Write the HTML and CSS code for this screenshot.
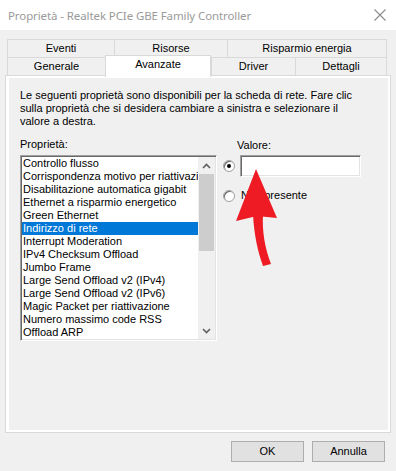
FILE: index.html
```html
<!DOCTYPE html>
<html lang="it">
<head>
<meta charset="utf-8">
<title>Proprietà - Realtek PCIe GBE Family Controller</title>
<link rel="stylesheet" href="styles.css">
</head>
<body>
<div class="window">
  <div class="titlebar">
    <span class="title">Proprietà - Realtek PCIe GBE Family Controller</span>
    <svg class="close" width="12" height="12" viewBox="0 0 12 12"><path d="M0.5 0.5 L11.5 11.5 M11.5 0.5 L0.5 11.5" stroke="#8a8a8a" stroke-width="1.1" fill="none"/></svg>
  </div>

  <div class="tabs">
    <div class="tabrow">
      <div class="tab t-eventi">Eventi</div>
      <div class="tab t-risorse">Risorse</div>
      <div class="tab t-risparmio last">Risparmio energia</div>
    </div>
    <div class="tabrow">
      <div class="tab t-generale">Generale</div>
      <div class="tab t-avanzate selected">Avanzate</div>
      <div class="tab t-driver">Driver</div>
      <div class="tab t-dettagli last">Dettagli</div>
    </div>
  </div>

  <div class="panel">
    <div class="page">
      <p class="intro">Le seguenti proprietà sono disponibili per la scheda di rete. Fare clic<br>sulla proprietà che si desidera cambiare a sinistra e selezionare il<br>valore a destra.</p>
      <div class="cols">
        <div class="propcol">
          <div class="label">Proprietà:</div>
          <div class="listbox">
            <ul class="items">
              <li>Controllo flusso</li>
              <li>Corrispondenza motivo per riattivazione</li>
              <li>Disabilitazione automatica gigabit</li>
              <li>Ethernet a risparmio energetico</li>
              <li>Green Ethernet</li>
              <li class="sel">Indirizzo di rete</li>
              <li>Interrupt Moderation</li>
              <li>IPv4 Checksum Offload</li>
              <li>Jumbo Frame</li>
              <li>Large Send Offload v2 (IPv4)</li>
              <li>Large Send Offload v2 (IPv6)</li>
              <li>Magic Packet per riattivazione</li>
              <li>Numero massimo code RSS</li>
              <li>Offload ARP</li>
            </ul>
            <div class="scrollbar">
              <div class="sb-btn">
                <svg width="9" height="6" viewBox="0 0 9 6"><path d="M1 5 L4.5 1.5 L8 5" stroke="#606060" stroke-width="1.6" fill="none"/></svg>
              </div>
              <div class="sb-track"><div class="sb-thumb"></div></div>
              <div class="sb-btn">
                <svg width="9" height="6" viewBox="0 0 9 6"><path d="M1 1 L4.5 4.5 L8 1" stroke="#606060" stroke-width="1.6" fill="none"/></svg>
              </div>
            </div>
          </div>
        </div>
        <div class="valcol">
          <div class="label vlabel">Valore:</div>
          <div class="radiorow">
            <span class="radio checked"></span>
            <span class="input"></span>
          </div>
          <div class="radiorow second">
            <span class="radio"></span>
            <span class="rtext">Non presente</span>
          </div>
        </div>
      </div>
    </div>
  </div>

  <div class="buttons">
    <div class="btn">OK</div>
    <div class="btn">Annulla</div>
  </div>

  <svg class="arrow" width="396" height="471" viewBox="0 0 396 471">
    <path d="M256 169 L236 221 L257 216 L277 218 Z" fill="#ee1b24"/>
    <path d="M253 214 C254 235 258 252 263 266 L271 264 C265 248 262 232 263 214 Z" fill="#ee1b24"/>
  </svg>
</div>
</body>
</html>
```

FILE: styles.css
```css
* { box-sizing: border-box; }
html, body { margin: 0; padding: 0; }
body {
  width: 396px;
  height: 471px;
  background: #f0f0f0;
  font-family: "Liberation Sans", Arial, sans-serif;
  font-size: 11px;
  color: #000;
  overflow: hidden;
}
.window { position: relative; width: 396px; height: 471px; }

.titlebar {
  height: 30px;
  background: #fff;
  display: flex;
  align-items: center;
  justify-content: space-between;
  padding: 0 10px 0 8px;
}
.title {
  font-family: "Noto Sans", "Open Sans", sans-serif;
  font-size: 11.5px;
  color: #9a9a9a;
  letter-spacing: -0.1px;
}
.close { display: block; }

.tabs {
  margin: 9px 0 0 7px;
  width: 380px;
}
.tabrow { display: flex; height: 18px; }
.tab {
  border-top: 1px solid #d9d9d9;
  border-left: 1px solid #d9d9d9;
  background: #f0f0f0;
  text-align: center;
  line-height: 17px;
  white-space: nowrap;
}
.tab.last { border-right: 1px solid #d9d9d9; }
.t-eventi { width: 107px; }
.t-risorse { width: 113px; }
.t-risparmio { width: 160px; }
.t-generale { width: 98px; }
.t-avanzate { width: 106px; }
.t-driver { width: 84px; }
.t-dettagli { width: 92px; }
.tab.selected {
  position: relative;
  z-index: 2;
  background: #fff;
  border-right: 1px solid #d9d9d9;
  height: 22px;
  margin-top: -2px;
  margin-bottom: -2px;
  line-height: 16px;
}

.panel {
  margin: 0 0 0 5px;
  width: 386px;
  height: 358px;
  border: 1px solid #d9d9d9;
  background: #fff;
  padding: 2px 2px 2px 3px;
}
.page {
  background: #f0f0f0;
  height: 100%;
  padding: 11px 0 0 11px;
}
.intro {
  margin: 0;
  line-height: 13px;
  white-space: nowrap;
}
.cols {
  display: flex;
  margin-top: 10px;
}
.label { line-height: 13px; height: 13px; }

.listbox {
  margin-top: 4px;
  width: 197px;
  height: 186px;
  display: flex;
  background: #fff;
  border-top: 1px solid #a0a0a0;
  border-left: 1px solid #a0a0a0;
  border-right: 1px solid #fff;
  border-bottom: 1px solid #fff;
  box-shadow: inset 1px 1px 0 #696969, inset -1px -1px 0 #e3e3e3;
  padding: 1px;
}
.items {
  list-style: none;
  margin: 0;
  padding: 0;
  width: 176px;
  overflow: hidden;
}
.items li {
  height: 13px;
  line-height: 13px;
  padding-left: 1px;
  white-space: nowrap;
  overflow: hidden;
}
.items li.sel { background: #0078d7; color: #fff; }

.scrollbar {
  width: 17px;
  display: flex;
  flex-direction: column;
  background: #f0f0f0;
}
.sb-btn {
  height: 17px;
  display: flex;
  align-items: center;
  justify-content: center;
}
.sb-track { flex: 1; padding: 0 1px; }
.sb-thumb { height: 77px; background: #cdcdcd; }

.valcol {
  margin-left: 6px;
  display: flex;
  flex-direction: column;
}
.vlabel { margin-left: 14px; margin-top: 1px; }
.radiorow {
  display: flex;
  align-items: center;
  margin-top: 3px;
}
.radio {
  width: 12px;
  height: 12px;
  border-radius: 50%;
  background: #fff;
  border: 1px solid #a0a0a0;
  box-shadow: inset 1px 1px 0 #696969;
  position: relative;
  flex: none;
}
.radio.checked::after {
  content: "";
  position: absolute;
  left: 3px;
  top: 3px;
  width: 4px;
  height: 4px;
  border-radius: 50%;
  background: #000;
}
.input {
  margin-left: 5px;
  width: 121px;
  height: 22px;
  background: #fff;
  border-top: 1px solid #a0a0a0;
  border-left: 1px solid #a0a0a0;
  border-right: 1px solid #fff;
  border-bottom: 1px solid #fff;
  box-shadow: inset 1px 1px 0 #696969, inset -1px -1px 0 #e3e3e3;
}
.radiorow.second { margin-top: 12px; }
.rtext { margin-left: 6px; line-height: 13px; }

.buttons {
  display: flex;
  justify-content: flex-end;
  gap: 8px;
  padding: 8px 11px 0 0;
}
.btn {
  width: 73px;
  height: 21px;
  background: #e1e1e1;
  border: 1px solid #adadad;
  text-align: center;
  line-height: 19px;
}

.arrow {
  position: absolute;
  left: 0;
  top: 0;
  pointer-events: none;
}
```
